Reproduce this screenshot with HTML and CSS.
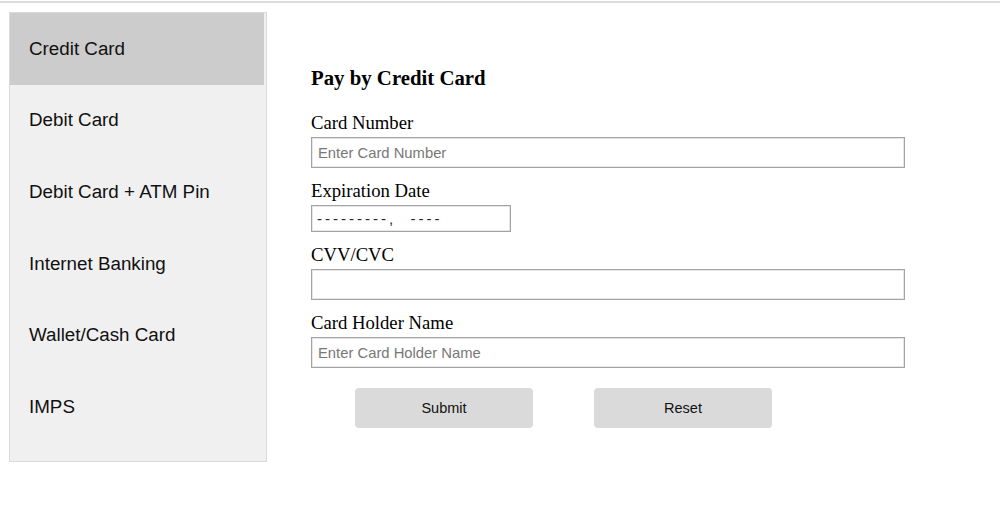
FILE: index.html
```html
<!DOCTYPE html>
<html>
<head>
<meta charset="utf-8">
<link rel="stylesheet" href="styles.css">
</head>
<body>
<div class="topline"></div>
<div class="page">
  <nav class="sidebar">
    <div class="tab active">Credit Card</div>
    <div class="tab">Debit Card</div>
    <div class="tab">Debit Card + ATM Pin</div>
    <div class="tab">Internet Banking</div>
    <div class="tab">Wallet/Cash Card</div>
    <div class="tab">IMPS</div>
  </nav>
  <main class="content">
    <h3 class="title">Pay by Credit Card</h3>
    <form class="form">
      <label class="label">Card Number</label>
      <input class="field" type="text" placeholder="Enter Card Number">
      <label class="label">Expiration Date</label>
      <input class="field date" type="text" value="---------,  ----">
      <label class="label">CVV/CVC</label>
      <input class="field" type="text">
      <label class="label">Card Holder Name</label>
      <input class="field" type="text" placeholder="Enter Card Holder Name">
      <div class="buttons">
        <button type="button" class="btn">Submit</button>
        <button type="button" class="btn">Reset</button>
      </div>
    </form>
  </main>
</div>
</body>
</html>
```
FILE: styles.css
```css
html, body {
  margin: 0;
  padding: 0;
  background: #fff;
}
body {
  font-family: "Liberation Serif", "Times New Roman", serif;
  color: #000;
}
.topline {
  margin-top: 1px;
  height: 2px;
  background: #dcdcdc;
}
.page {
  display: flex;
  padding: 9px 0 0 9px;
}
.sidebar {
  width: 256px;
  height: 448px;
  border: 1px solid #dadada;
  background: #f0f0f0;
  display: flex;
  flex-direction: column;
  box-sizing: content-box;
}
.tab {
  height: 71.6px;
  flex: 0 0 71.6px;
  display: flex;
  align-items: center;
  padding-left: 19px;
  font-family: "Liberation Sans", Arial, sans-serif;
  font-size: 18.8px;
  color: #111;
  margin-right: 2px;
}
.tab.active {
  background: #cccccc;
}
.content {
  padding-left: 44px;
  flex: 1;
}
.title {
  margin: 55px 0 0 0;
  font-size: 20.8px;
  line-height: 22px;
  font-weight: bold;
}
.form {
  display: flex;
  flex-direction: column;
  align-items: flex-start;
  margin-top: 23px;
}
.label {
  display: block;
  font-size: 18.7px;
  line-height: 21px;
  margin-bottom: 4px;
}
.field {
  box-sizing: border-box;
  width: 594px;
  height: 31px;
  margin: 0 0 12px 0;
  padding: 0 6px;
  border: 1px solid #a3a3a3;
  box-shadow: inset 0 0 0 1px #e6e6e6;
  font-family: "Liberation Sans", Arial, sans-serif;
  font-size: 14.8px;
  color: #222;
  background: #fff;
  outline: none;
}
.field::placeholder {
  color: #777;
}
.field.date {
  width: 200px;
  height: 27px;
  padding-left: 5px;
  font-size: 15px;
  letter-spacing: 3px;
  color: #222;
}
.buttons {
  display: flex;
  gap: 61px;
  margin-top: 8px;
  padding-left: 44px;
}
.btn {
  width: 178px;
  height: 40px;
  border: none;
  border-radius: 4px;
  background: #dadada;
  font-family: "Liberation Sans", Arial, sans-serif;
  font-size: 14.5px;
  color: #111;
  cursor: pointer;
}
```
